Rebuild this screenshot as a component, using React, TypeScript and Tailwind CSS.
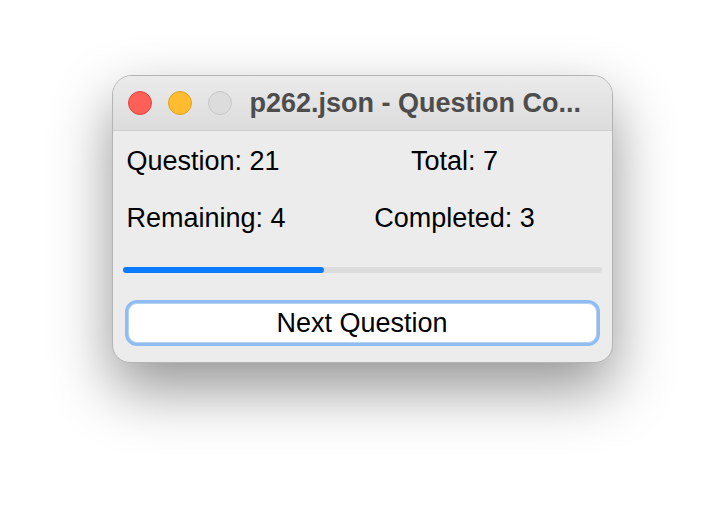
const font = { fontFamily: '"Liberation Sans", Arial, sans-serif' };

function Light({ className }: { className: string }) {
  return <span className={`h-[24px] w-[24px] shrink-0 rounded-full border ${className}`} />;
}

export default function App() {
  const done = 3;
  const total = 7;

  return (
    <div className="flex h-[510px] w-[724px] justify-center bg-white pt-[75px]" style={font}>
      <div className="flex h-[288px] w-[501px] flex-col overflow-hidden rounded-t-[20px] rounded-b-[18px] border border-[#b4b4b4] bg-[#ececec] shadow-[0_26px_60px_rgba(0,0,0,0.42)]">

        {/* Title bar */}
        <div className="flex h-[55px] shrink-0 items-center gap-[16px] border-b border-[#cfcfcf] bg-gradient-to-b from-[#ebebeb] to-[#dcdcdc] pl-[15px]">
          <Light className="border-[#e1463f] bg-[#fe5f57]" />
          <Light className="border-[#dfa224] bg-[#febc2e]" />
          <Light className="border-[#c6c6c6] bg-[#dcdcdc]" />
          <span className="ml-[2px] whitespace-nowrap text-[27px] font-bold leading-none text-[#4d4d4d]">
            p262.json - Question Co...
          </span>
        </div>

        {/* Body */}
        <div className="flex flex-1 flex-col px-[10px] pt-[15px]">
          <div className="grid grid-cols-[250px_164px] gap-y-[27px] text-[27px] leading-[30px] text-black">
            <span className="pl-[4px]">Question: 21</span>
            <span className="text-center">Total: 7</span>
            <span className="pl-[4px]">Remaining: 4</span>
            <span className="text-center">Completed: {done}</span>
          </div>

          <div className="mt-[34px] h-[6px] w-full rounded-full bg-[#dcdcdc]">
            <div className="h-full rounded-full bg-[#0a7aff]" style={{ width: `${(done / total) * 98}%` }} />
          </div>

          <div className="mx-[2px] mt-[27px] rounded-[12px] bg-[#8fbcf1] p-[3px]">
            <button className="flex h-[40px] w-full items-center justify-center rounded-[9px] border border-[#b6d2f3] bg-white text-[27px] text-black">
              Next Question
            </button>
          </div>
        </div>

      </div>
    </div>
  );
}
